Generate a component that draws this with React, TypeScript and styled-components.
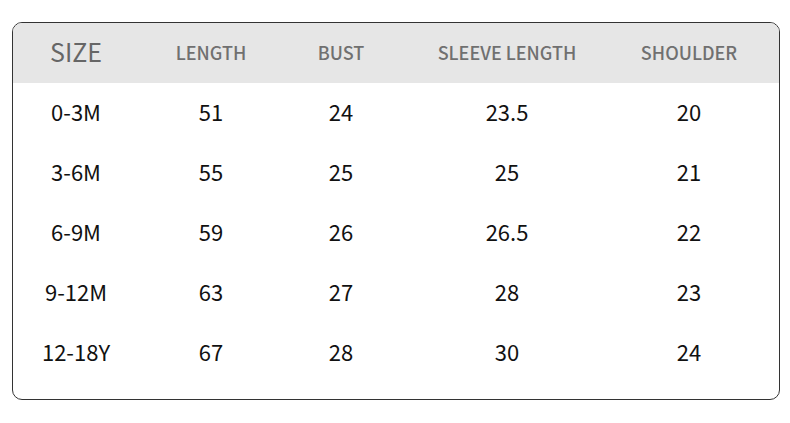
import styled, { createGlobalStyle } from 'styled-components'

const GlobalStyle = createGlobalStyle`
  html, body {
    margin: 0;
    padding: 0;
    background: #ffffff;
  }
  body {
    font-family: "Noto Sans CJK SC", "Noto Sans", sans-serif;
  }
`

const columns = ['LENGTH', 'BUST', 'SLEEVE LENGTH', 'SHOULDER']

const rows = [
  ['0-3M', '51', '24', '23.5', '20'],
  ['3-6M', '55', '25', '25', '21'],
  ['6-9M', '59', '26', '26.5', '22'],
  ['9-12M', '63', '27', '28', '23'],
  ['12-18Y', '67', '28', '30', '24'],
]

const App = () => {
  return (
    <Page>
      <GlobalStyle />
      <Chart>
        <HeaderRow>
          <HeadCell $big>SIZE</HeadCell>
          {columns.map((c) => (
            <HeadCell key={c}>{c}</HeadCell>
          ))}
        </HeaderRow>
        {rows.map((r) => (
          <BodyRow key={r[0]}>
            {r.map((v, i) => (
              <Cell key={i}>{v}</Cell>
            ))}
          </BodyRow>
        ))}
      </Chart>
    </Page>
  )
}

const Page = styled.div`
  width: 790px;
  height: 423px;
  padding: 22px 10px 0 12px;
  box-sizing: border-box;
`

const Chart = styled.div`
  width: 768px;
  height: 378px;
  box-sizing: border-box;
  border: 1px solid #333333;
  border-radius: 10px;
  overflow: hidden;
`

const gridCols = `
  display: grid;
  grid-template-columns: 126px 144px 116px 216px 148px;
  align-items: center;
`

const HeaderRow = styled.div`
  ${gridCols}
  height: 60px;
  padding-bottom: 3px;
  box-sizing: border-box;
  background: #e6e6e6;
`

const BodyRow = styled.div`
  ${gridCols}
  height: 60px;
  padding-bottom: 4px;
  box-sizing: border-box;
`

const HeadCell = styled.div<{ $big?: boolean }>`
  text-align: center;
  color: ${(p) => (p.$big ? '#666666' : '#707070')};
  font-size: ${(p) => (p.$big ? '25px' : '18px')};
  font-weight: ${(p) => (p.$big ? 400 : 500)};
  line-height: 1;
`

const Cell = styled.div`
  text-align: center;
  color: #111111;
  font-size: 22px;
  line-height: 1;
`

export default App
